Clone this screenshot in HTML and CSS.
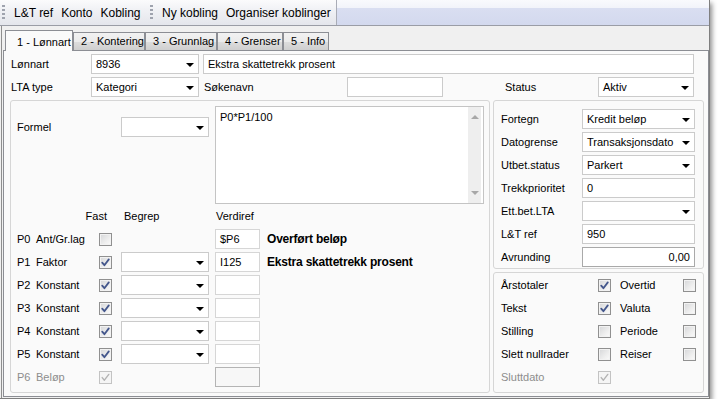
FILE: index.html
```html
<!DOCTYPE html>
<html lang="no">
<head>
<meta charset="utf-8">
<title>Lønnart</title>
<link rel="stylesheet" href="styles.css">
</head>
<body>
<div class="window">
  <div class="toolbar">
    <div class="tgroup g1">
      <span class="grip"></span>
      <span class="tbtn">L&amp;T ref</span>
      <span class="tbtn">Konto</span>
      <span class="tbtn">Kobling</span>
    </div>
    <div class="tgroup g2">
      <span class="grip"></span>
      <span class="tbtn">Ny kobling</span>
      <span class="tbtn">Organiser koblinger</span>
    </div>
  </div>
  <div class="main">
    <div class="tabs">
      <div class="tab active">1 - Lønnart</div>
      <div class="tab t2">2 - Kontering</div>
      <div class="tab t3">3 - Grunnlag</div>
      <div class="tab t4">4 - Grenser</div>
      <div class="tab t5">5 - Info</div>
    </div>
    <div class="panel">
      <div class="row">
        <span class="lbl l81">Lønnart</span>
        <div class="combo w108"><span class="val">8936</span></div>
        <div class="input w491">Ekstra skattetrekk prosent</div>
      </div>
      <div class="row r2">
        <span class="lbl l81">LTA type</span>
        <div class="combo w108"><span class="val">Kategori</span></div>
        <span class="lbl lsok">Søkenavn</span>
        <div class="input w96"></div>
        <span class="lbl lstatus">Status</span>
        <div class="combo w96"><span class="val">Aktiv</span></div>
      </div>
      <div class="groups">
        <div class="group lgroup">
          <span class="lbl formel">Formel</span>
          <div class="combo w88 fcombo"></div>
          <div class="textarea">
            <div class="txt">P0*P1/100</div>
            <div class="sb"><span class="sbup"></span><span class="sbdn"></span></div>
          </div>

          <span class="hdr hfast">Fast</span>
          <span class="hdr hbeg">Begrep</span>
          <span class="hdr hver">Verdiref</span>

          <span class="lbl">P0</span><span class="lbl">Ant/Gr.lag</span>
          <span class="cb"></span>
          <span></span>
          <div class="input vref">$P6</div>
          <span class="blbl">Overført beløp</span>

          <span class="lbl">P1</span><span class="lbl">Faktor</span>
          <span class="cb on"><svg viewBox="0 0 11 11"><path d="M2.2 5.6 L4.4 8.2 L8.8 2.4"/></svg></span>
          <div class="combo w88"></div>
          <div class="input vref">I125</div>
          <span class="blbl">Ekstra skattetrekk prosent</span>

          <span class="lbl">P2</span><span class="lbl">Konstant</span>
          <span class="cb on"><svg viewBox="0 0 11 11"><path d="M2.2 5.6 L4.4 8.2 L8.8 2.4"/></svg></span>
          <div class="combo w88"></div>
          <div class="input vref empty"></div>
          <span></span>

          <span class="lbl">P3</span><span class="lbl">Konstant</span>
          <span class="cb on"><svg viewBox="0 0 11 11"><path d="M2.2 5.6 L4.4 8.2 L8.8 2.4"/></svg></span>
          <div class="combo w88"></div>
          <div class="input vref empty"></div>
          <span></span>

          <span class="lbl">P4</span><span class="lbl">Konstant</span>
          <span class="cb on"><svg viewBox="0 0 11 11"><path d="M2.2 5.6 L4.4 8.2 L8.8 2.4"/></svg></span>
          <div class="combo w88"></div>
          <div class="input vref empty"></div>
          <span></span>

          <span class="lbl">P5</span><span class="lbl">Konstant</span>
          <span class="cb on"><svg viewBox="0 0 11 11"><path d="M2.2 5.6 L4.4 8.2 L8.8 2.4"/></svg></span>
          <div class="combo w88"></div>
          <div class="input vref empty"></div>
          <span></span>

          <span class="lbl dis">P6</span><span class="lbl dis">Beløp</span>
          <span class="cb on dis"><svg viewBox="0 0 11 11"><path d="M2.2 5.6 L4.4 8.2 L8.8 2.4"/></svg></span>
          <span></span>
          <div class="input vref disabled"></div>
          <span></span>
        </div>

        <div class="rightcol">
          <div class="group rtop">
            <div class="frow"><span class="lbl">Fortegn</span><div class="combo w113"><span class="val">Kredit beløp</span></div></div>
            <div class="frow"><span class="lbl">Datogrense</span><div class="combo w113"><span class="val">Transaksjonsdato</span></div></div>
            <div class="frow"><span class="lbl">Utbet.status</span><div class="combo w113"><span class="val">Parkert</span></div></div>
            <div class="frow"><span class="lbl">Trekkprioritet</span><div class="input w113">0</div></div>
            <div class="frow"><span class="lbl">Ett.bet.LTA</span><div class="combo w113"></div></div>
            <div class="frow"><span class="lbl">L&amp;T ref</span><div class="input w113">950</div></div>
            <div class="frow"><span class="lbl">Avrunding</span><div class="input w113 num">0,00</div></div>
          </div>
          <div class="group rbot">
            <span class="lbl">Årstotaler</span>
            <span class="cb on"><svg viewBox="0 0 11 11"><path d="M2.2 5.6 L4.4 8.2 L8.8 2.4"/></svg></span>
            <span class="lbl">Overtid</span>
            <span class="cb"></span>

            <span class="lbl">Tekst</span>
            <span class="cb on"><svg viewBox="0 0 11 11"><path d="M2.2 5.6 L4.4 8.2 L8.8 2.4"/></svg></span>
            <span class="lbl">Valuta</span>
            <span class="cb"></span>

            <span class="lbl">Stilling</span>
            <span class="cb"></span>
            <span class="lbl">Periode</span>
            <span class="cb"></span>

            <span class="lbl">Slett nullrader</span>
            <span class="cb"></span>
            <span class="lbl">Reiser</span>
            <span class="cb"></span>

            <span class="lbl dis">Sluttdato</span>
            <span class="cb on dis"><svg viewBox="0 0 11 11"><path d="M2.2 5.6 L4.4 8.2 L8.8 2.4"/></svg></span>
          </div>
        </div>
      </div>
    </div>
  </div>
</div>
</body>
</html>
```

FILE: styles.css
```css
* { box-sizing: border-box; }
html, body { margin: 0; padding: 0; background: #ffffff; }
body {
  font-family: "Liberation Sans", Arial, sans-serif;
  font-size: 11px;
  color: #000;
}

.window {
  width: 710px;
  height: 399px;
  background: #f0f0f0;
  border-right: 1px solid #7f7f7f;
  border-bottom: 1px solid #7f7f7f;
  box-shadow: 2px 3px 5px rgba(0, 0, 0, 0.45);
  display: flex;
  flex-direction: column;
}

/* toolbar */
.toolbar {
  height: 26px;
  flex: none;
  display: flex;
  border-bottom: 1px solid #9a9da6;
  background: linear-gradient(#f9fafd 0, #f2f4fa 30%, #d9def1 34%, #d3d9ee 100%);
  font-size: 12px;
}
.tgroup {
  display: flex;
  align-items: center;
  height: 25px;
  background: linear-gradient(#fbfbfc 0, #eff0f4 45%, #e4e6ec 100%);
}
.g1 { width: 148px; }
.g2 { width: 189px; border-right: 1px solid #a9acb6; }
.grip {
  width: 3px;
  height: 17px;
  margin: 0 5px 0 2px;
  background-image: radial-gradient(circle, #9fa3ae 45%, transparent 55%);
  background-size: 3px 4px;
}
.tbtn { padding: 0 4px; white-space: nowrap; }

/* main + tabs */
.main {
  flex: 1;
  margin-left: 1px;
  border-left: 1px solid #8e8e8e;
  padding: 0 0 1px 1px;
  display: flex;
  flex-direction: column;
}
.tabs {
  height: 24px;
  flex: none;
  display: flex;
  align-items: flex-end;
  padding-left: 2px;
  position: relative;
  z-index: 1;
}
.tab {
  height: 18px;
  line-height: 17px;
  padding-left: 7px;
  border: 1px solid #8c8e94;
  border-bottom: none;
  background: linear-gradient(#f2f2f2 0, #ebebeb 50%, #dddddd 51%, #cfcfcf 100%);
  white-space: nowrap;
}
.tab.active {
  width: 68px;
  height: 21px;
  margin-bottom: -1px;
  padding-left: 11px;
  line-height: 22px;
  background: #fafafa;
  border-color: #8c8e94;
}
.t2 { width: 72px; }
.t3 { width: 72px; }
.t4 { width: 66px; }
.t5 { width: 46px; }

.panel {
  height: 347px;
  flex: none;
  border: 1px solid #8c8e94;
  background: #fafafa;
  padding: 3px 4px 3px 6px;
}

.row { display: flex; height: 20px; align-items: stretch; }
.r2 { margin-top: 3px; }
.lbl { line-height: 20px; white-space: nowrap; }
.l81 { width: 81px; padding-left: 1px; }
.lsok { width: 148px; padding-left: 5px; }
.lstatus { width: 155px; padding-left: 62px; }
.dis { color: #8d8d8d; }

.input, .combo {
  height: 20px;
  background: #fff;
  border: 1px solid #cbcbcb;
  line-height: 18px;
  padding-left: 4px;
  white-space: nowrap;
  overflow: hidden;
}
.combo { position: relative; }
.combo::after {
  content: "";
  position: absolute;
  right: 4px;
  top: 8px;
  border-top: 4px solid #000;
  border-left: 4px solid transparent;
  border-right: 4px solid transparent;
}
.w108 { width: 108px; }
.w96 { width: 96px; }
.w88 { width: 88px; }
.w113 { width: 113px; }
.w491 { width: 491px; margin-left: 4px; }
.num { text-align: right; padding-right: 4px; border-color: #a9a9a9; }

.groups { display: flex; gap: 3px; margin-top: 3px; height: 293px; }
.group {
  border: 1px solid #d6d6d6;
  border-radius: 3px;
  background: #fafafa;
}

/* left group */
.lgroup {
  width: 480px;
  padding: 5px 5px 0 6px;
  display: grid;
  grid-template-columns: 19px 63px 22px 94px 51px 1fr;
  grid-template-rows: 98px 19px repeat(7, 20px);
  row-gap: 3px;
  align-content: start;
}
.formel { grid-column: 1 / 4; align-self: start; margin-top: 11px; }
.fcombo { align-self: start; margin-top: 11px; }
.textarea {
  grid-column: 5 / 7;
  border: 1px solid #c4c4c4;
  background: #fff;
  display: flex;
}
.txt { flex: 1; padding: 3px 0 0 4px; line-height: 14px; }
.sb {
  width: 13px;
  margin-right: 2px;
  background: #eeeeee;
  display: flex;
  flex-direction: column;
  justify-content: space-between;
  align-items: center;
  padding: 8px 0 8px;
}
.sbup {
  border-bottom: 4px solid #a7a7a7;
  border-left: 4px solid transparent;
  border-right: 4px solid transparent;
}
.sbdn {
  border-top: 4px solid #a7a7a7;
  border-left: 4px solid transparent;
  border-right: 4px solid transparent;
}
.hdr { line-height: 19px; }
.hfast { grid-column: 2 / 4; text-align: right; padding-right: 14px; }
.hbeg { grid-column: 4; padding-left: 3px; }
.hver { grid-column: 5 / 7; padding-left: 1px; }

.vref { width: 45px; border-color: #d6d6d6; padding-left: 4px; }
.vref.disabled { border-color: #b4b4b4; background: #f7f7f7; }
.blbl {
  font-weight: bold;
  font-size: 12px;
  letter-spacing: -0.2px;
  line-height: 20px;
  padding-left: 1px;
  white-space: nowrap;
}

/* checkboxes */
.cb {
  width: 13px;
  height: 13px;
  align-self: center;
  margin-top: 1px;
  border: 1px solid #909090;
  background: linear-gradient(135deg, #d5d6d8 0, #eeeeee 60%, #fbfbfb 100%);
  box-shadow: inset 0 0 0 1px #f2f2f2;
  display: block;
}
.cb svg { display: block; width: 11px; height: 11px; }
.cb svg path { fill: none; stroke: #44578c; stroke-width: 1.8; stroke-linecap: round; stroke-linejoin: round; }
.cb.dis { border-color: #c3c3c3; background: #f5f5f5; box-shadow: none; }
.cb.dis svg path { stroke: #b3b3b3; stroke-width: 1.4; }

/* right column */
.rightcol { width: 211px; display: flex; flex-direction: column; gap: 3px; }
.rtop {
  height: 169px;
  padding: 8px 8px 0 7px;
  display: flex;
  flex-direction: column;
  gap: 3px;
}
.frow { display: flex; height: 20px; }
.frow .lbl { flex: 1; }
.rbot {
  height: 121px;
  padding: 2px 0 0 7px;
  display: grid;
  grid-template-columns: 97px 22px 63px 13px;
  grid-auto-rows: 20px;
  row-gap: 3px;
  align-content: start;
}
```
